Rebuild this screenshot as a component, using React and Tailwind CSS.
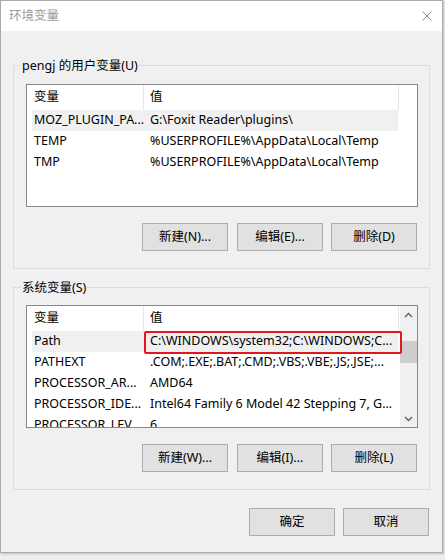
import React from "react";

const userRows = [
  ["MOZ_PLUGIN_PA...", "G:\\Foxit Reader\\plugins\\", true],
  ["TEMP", "%USERPROFILE%\\AppData\\Local\\Temp", false],
  ["TMP", "%USERPROFILE%\\AppData\\Local\\Temp", false],
];

const sysRows = [
  ["Path", "C:\\WINDOWS\\system32;C:\\WINDOWS;C...", true],
  ["PATHEXT", ".COM;.EXE;.BAT;.CMD;.VBS;.VBE;.JS;.JSE;...", false],
  ["PROCESSOR_AR...", "AMD64", false],
  ["PROCESSOR_IDE...", "Intel64 Family 6 Model 42 Stepping 7, G...", false],
  ["PROCESSOR_LEV...", "6", false],
];

function Header() {
  return (
    <div className="flex h-[25px] shrink-0 bg-white">
      <div className="w-[117px] shrink-0 pl-[7px] flex items-center border-r border-[#e5e5e5]">变量</div>
      <div className="w-[255px] shrink-0 pl-[6px] flex items-center border-r border-[#e5e5e5]">值</div>
    </div>
  );
}

function Rows({ rows }) {
  return (
    <div className="flex flex-col pl-[5px]">
      {rows.map(([k, v, sel]) => (
        <div
          key={k}
          className={`flex h-[21px] w-[366px] shrink-0 items-center whitespace-nowrap overflow-hidden ${sel ? "bg-[#f0f0f0]" : ""}`}
        >
          <div className="w-[116px] shrink-0 pl-[2px] overflow-hidden">{k}</div>
          <div className="flex-1 pl-[2px] overflow-hidden">{v}</div>
        </div>
      ))}
    </div>
  );
}

function Chevron({ down }) {
  return (
    <svg width="9" height="6" viewBox="0 0 9 6">
      <path
        d={down ? "M1 1 L4.5 4.5 L8 1" : "M1 5 L4.5 1.5 L8 5"}
        fill="none"
        stroke="#606060"
        strokeWidth="1.4"
      />
    </svg>
  );
}

function Btn({ children, className = "" }) {
  return (
    <div
      className={`w-[86px] h-[28px] shrink-0 bg-[#e1e1e1] border border-[#adadad] flex items-center justify-center ${className}`}
    >
      {children}
    </div>
  );
}

export default function App() {
  return (
    <div className="w-[445px] h-[560px] bg-[#eeeeee] text-[12.5px] text-black font-['Segoe_UI','Noto_Sans','Noto_Sans_CJK_SC',sans-serif] overflow-hidden">
      <div className="w-[443px] h-[553px] border border-[#aaaaaa] bg-[#f0f0f0] flex flex-col shadow-[1px_1px_2px_rgba(0,0,0,0.2)]">
        {/* title bar */}
        <div className="h-[30px] shrink-0 bg-white flex items-center justify-between pl-[8px] pr-[10px]">
          <span className="text-[#9a9a9a] leading-[16px]">环境变量</span>
          <svg width="10" height="10" viewBox="0 0 10 10">
            <path d="M0.5 0.5 L9.5 9.5 M9.5 0.5 L0.5 9.5" stroke="#8c8c8c" strokeWidth="1" fill="none" />
          </svg>
        </div>

        <div className="flex flex-col pl-[12px] pt-[26px]">
          {/* user variables */}
          <fieldset className="w-[417px] border border-[#dcdcdc] pb-[17px]">
            <legend className="ml-[7px] px-[1px] leading-[17px]">pengj 的用户变量(U)</legend>
            <div className="ml-[12px] mt-[10px] w-[392px] h-[123px] border border-[#828790] bg-white flex flex-col overflow-hidden">
              <Header />
              <Rows rows={userRows} />
            </div>
            <div className="flex mt-[16px] ml-[128px]">
              <Btn>新建(N)...</Btn>
              <Btn className="ml-[9px]">编辑(E)...</Btn>
              <Btn className="ml-[8px]">删除(D)</Btn>
            </div>
          </fieldset>

          {/* system variables */}
          <fieldset className="w-[417px] mt-[10px] border border-[#dcdcdc] pb-[17px]">
            <legend className="ml-[7px] px-[1px] leading-[17px]">系统变量(S)</legend>
            <div className="relative ml-[12px] mt-[9px] w-[392px] h-[123px] border border-[#828790] bg-white flex overflow-hidden">
              <div className="flex flex-col w-[373px] shrink-0 overflow-hidden">
                <Header />
                <Rows rows={sysRows} />
              </div>
              <div className="w-[17px] shrink-0 bg-[#f0f0f0] flex flex-col">
                <div className="h-[17px] shrink-0 flex items-center justify-center">
                  <Chevron />
                </div>
                <div className="h-[18px] shrink-0" />
                <div className="h-[22px] shrink-0 bg-[#cdcdcd]" />
                <div className="flex-1" />
                <div className="h-[17px] shrink-0 flex items-center justify-center">
                  <Chevron down />
                </div>
              </div>
              <div className="absolute left-[117px] top-[25px] w-[258px] h-[23px] border-2 border-[#e2161c] rounded-[2px]" />
            </div>
            <div className="flex mt-[16px] ml-[128px]">
              <Btn>新建(W)...</Btn>
              <Btn className="ml-[9px]">编辑(I)...</Btn>
              <Btn className="ml-[8px]">删除(L)</Btn>
            </div>
          </fieldset>

          <div className="flex mt-[18px] ml-[236px]">
            <Btn>确定</Btn>
            <Btn className="ml-[8px]">取消</Btn>
          </div>
        </div>
      </div>
    </div>
  );
}
